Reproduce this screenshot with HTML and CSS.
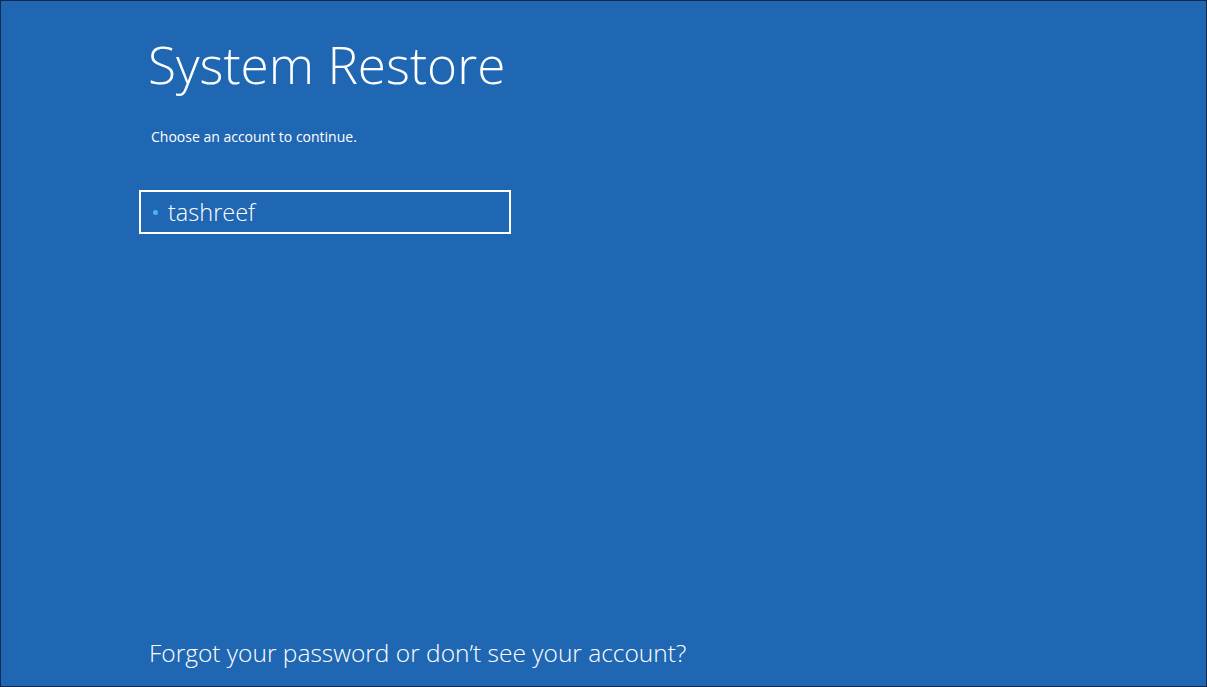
FILE: index.html
```html
<!DOCTYPE html>
<html lang="en">
<head>
    <meta charset="UTF-8">
    <meta name="viewport" content="width=device-width, initial-scale=1.0">
    <title>System Restore</title>
    <link rel="stylesheet" href="styles.css">
</head>
<body>
    <div class="screen">
        <div class="content">
            <h1>System Restore</h1>
            <p class="hint">Choose an account to continue.</p>
            <div class="account">
                <span class="dot"></span>
                <span class="name">tashreef</span>
            </div>
        </div>
        <div class="footer">
            <a href="#">Forgot your password or don’t see your account?</a>
        </div>
    </div>
</body>
</html>
```
FILE: styles.css
```css
html, body {
    margin: 0;
    padding: 0;
}
body {
    font-family: "Open Sans", "Noto Sans", sans-serif;
    background-color: #1f67b3;
    color: white;
}
.screen {
    width: 1207px;
    height: 687px;
    box-sizing: border-box;
    border: 1px solid #0f2a50;
    background-color: #1f67b3;
    display: flex;
    flex-direction: column;
    justify-content: space-between;
    padding: 0 0 0 138px;
}
.content {
    padding-top: 30px;
}
h1 {
    margin: 0 0 0 9px;
    font-size: 51.3px;
    font-weight: 300;
    line-height: 66px;
}
.hint {
    margin: 31px 0 0 12px;
    font-size: 14px;
    line-height: 18px;
}
.account {
    margin-top: 44px;
    width: 372px;
    height: 44px;
    box-sizing: border-box;
    border: 2px solid white;
    display: flex;
    align-items: center;
    padding-left: 12px;
}
.dot {
    width: 5px;
    height: 5px;
    border-radius: 50%;
    background-color: #4cb4f0;
    margin-right: 10px;
}
.name {
    font-size: 23.5px;
    font-weight: 300;
    line-height: 30px;
}
.footer {
    padding: 0 0 17px 10px;
}
.footer a {
    color: white;
    text-decoration: none;
    font-size: 24.5px;
    font-weight: 300;
    line-height: 32px;
}
```
